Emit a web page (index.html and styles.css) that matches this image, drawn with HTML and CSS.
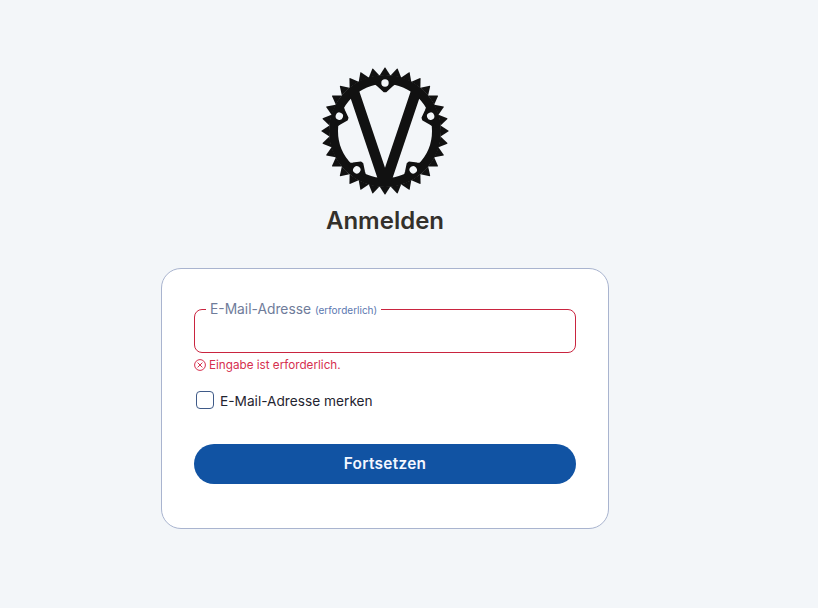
FILE: index.html
```html
<!DOCTYPE html>
<html lang="de">
<head>
<meta charset="utf-8">
<title>Anmelden</title>
<link rel="stylesheet" href="styles.css">
</head>
<body>
<main class="page">
  <svg class="logo" viewBox="-64 -64 128 128" width="128" height="128" aria-hidden="true">
    <defs>
      <polygon id="t1" points="-5.4,-55.6 -0.3,-63.6 0.3,-63.6 5.4,-55.6"/>
      <g id="t2"><use href="#t1"/><use href="#t1" transform="rotate(11.25)"/></g>
      <g id="t4"><use href="#t2"/><use href="#t2" transform="rotate(22.5)"/></g>
      <g id="t8"><use href="#t4"/><use href="#t4" transform="rotate(45)"/></g>
      <g id="t16"><use href="#t8"/><use href="#t8" transform="rotate(90)"/></g>
      <path id="boss" class="logo-boss" d="M-12,-49 H12 L7,-45 L1,-39.5 H-1 L-7,-45 Z"/>
      <circle id="hole" cx="0" cy="-48" r="3.7"/>
    </defs>
    <g class="logo-ink">
      <use href="#t16"/><use href="#t16" transform="rotate(180)"/>
      <circle class="logo-ring" cx="0" cy="0" r="51.5"/>
      <use href="#boss"/>
      <use href="#boss" transform="rotate(72)"/>
      <use href="#boss" transform="rotate(144)"/>
      <use href="#boss" transform="rotate(216)"/>
      <use href="#boss" transform="rotate(288)"/>
      <path d="M-36.8,-40 L-25.8,-40 L0,36.7 L25.8,-40 L36.8,-40 L4.9,55 L-4.9,55 Z"/>
    </g>
    <g class="logo-holes">
      <use href="#hole"/>
      <use href="#hole" transform="rotate(72)"/>
      <use href="#hole" transform="rotate(144)"/>
      <use href="#hole" transform="rotate(216)"/>
      <use href="#hole" transform="rotate(288)"/>
    </g>
  </svg>
  <h1 class="title">Anmelden</h1>
  <form class="card">
    <fieldset class="field">
      <legend class="field-label">E-Mail-Adresse <span class="field-hint">(erforderlich)</span></legend>
    </fieldset>
    <p class="error">
      <svg class="error-icon" viewBox="0 0 12 12" width="12" height="12" aria-hidden="true">
        <circle cx="6" cy="6" r="5.4"/>
        <path d="M3.6,3.6 L8.4,8.4 M8.4,3.6 L3.6,8.4"/>
      </svg>
      <span>Eingabe ist erforderlich.</span>
    </p>
    <label class="remember"><span class="checkbox"></span><span>E-Mail-Adresse merken</span></label>
    <button class="submit" type="button">Fortsetzen</button>
  </form>
</main>
</body>
</html>
```
FILE: styles.css
```css
* { box-sizing: border-box; }
html, body { margin: 0; height: 100%; }
body {
  background: #f3f6f9;
  font-family: "Inter", "Liberation Sans", sans-serif;
  color: #1f2430;
}
.page {
  width: 770px;
  padding-top: 67px;
  display: flex;
  flex-direction: column;
  align-items: center;
}
.logo { display: block; }
.logo-ink { fill: #111111; }
.logo-ring { fill: none; stroke: #111111; stroke-width: 9; }
.logo-boss { stroke: #111111; stroke-width: 1.5; stroke-linejoin: round; }
.logo-holes { fill: #f3f6f9; }
.title {
  margin: 11px 0 32px;
  font-size: 24px;
  line-height: 30px;
  font-weight: 600;
  color: #33302b;
}
.card {
  width: 448px;
  height: 261px;
  background: #fff;
  border: 1px solid #a9b4cf;
  border-radius: 20px;
  padding: 32px 32px 0;
  display: flex;
  flex-direction: column;
}
.field {
  margin: 0;
  padding: 0 11px;
  height: 52px;
  border: 1px solid #c9243f;
  border-radius: 8px;
}
.field-label {
  padding: 0 4px;
  font-size: 13.8px;
  line-height: 16px;
  color: #6f7c9a;
}
.field-hint { font-size: 10px; color: #5b78b0; }
.error {
  margin: 4px 0 0;
  display: flex;
  align-items: center;
  gap: 3px;
  font-size: 11.7px;
  line-height: 16px;
  color: #d6304f;
}
.error-icon { fill: none; stroke: #d6304f; stroke-width: 1; flex: none; }
.remember {
  margin-top: 18px;
  padding-left: 2px;
  display: flex;
  align-items: center;
  gap: 6px;
  font-size: 13.7px;
  line-height: 20px;
  color: #1f2430;
}
.checkbox {
  width: 18px;
  height: 18px;
  margin-bottom: 2px;
  border: 1px solid #3f5a88;
  border-radius: 4px;
  background: #fff;
}
.submit {
  margin-top: 33px;
  height: 40px;
  border: 0;
  border-radius: 20px;
  background: #1153a3;
  color: #f4f7ff;
  font: 600 15.4px/20px "Inter", "Liberation Sans", sans-serif;
  letter-spacing: 0.3px;
}
```
